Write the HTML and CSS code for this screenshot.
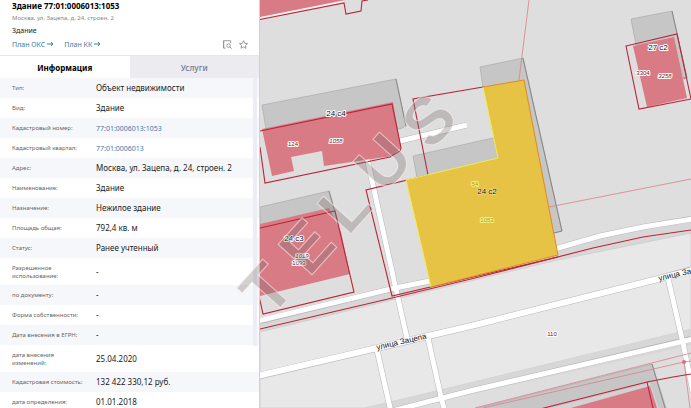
FILE: index.html
```html
<!DOCTYPE html>
<html lang="ru">
<head>
<meta charset="utf-8">
<title>Здание 77:01:0006013:1053</title>
<link rel="stylesheet" href="styles.css">
</head>
<body>
<div class="app">
  <aside class="panel">
    <header class="head">
      <h1 class="title">Здание 77:01:0006013:1053</h1>
      <p class="address">Москва, ул. Зацепа, д. 24, строен. 2</p>
      <p class="kind">Здание</p>
      <div class="actions">
        <a class="plan" href="#oks">План ОКС <svg class="arrow" viewBox="0 0 7 6"><path d="M0 3h6M4 1l2 2-2 2"/></svg></a>
        <a class="plan" href="#kk">План КК <svg class="arrow" viewBox="0 0 7 6"><path d="M0 3h6M4 1l2 2-2 2"/></svg></a>
        <span class="tools">
          <button class="tool" aria-label="Найти на карте"><svg viewBox="0 0 10 10"><path d="M3 9H.7V.8h7.800v2.700M.7 9V.8"/><circle cx="6.200" cy="6.200" r="2"/><path d="M7.700 7.700L9.600 9.600"/></svg></button>
          <button class="tool" aria-label="В избранное"><svg viewBox="0 0 10 10"><path d="M5 .8l1.300 2.900 3.200.3-2.400 2.100.7 3.100L5 7.600 2.200 9.200l.7-3.100L.5 4l3.200-.3z"/></svg></button>
        </span>
      </div>
    </header>
    <div class="tabs" role="tablist">
      <button class="tab tab-active" role="tab" aria-selected="true">Информация</button>
      <button class="tab" role="tab" aria-selected="false">Услуги</button>
    </div>
    <div class="details">
      <table class="facts">
        <tbody>
          <tr><th scope="row">Тип:</th><td>Объект недвижимости</td></tr>
          <tr><th scope="row">Вид:</th><td>Здание</td></tr>
          <tr><th scope="row">Кадастровый номер:</th><td><a href="#number">77:01:0006013:1053</a></td></tr>
          <tr><th scope="row">Кадастровый квартал:</th><td><a href="#block">77:01:0006013</a></td></tr>
          <tr><th scope="row">Адрес:</th><td>Москва, ул. Зацепа, д. 24, строен. 2</td></tr>
          <tr><th scope="row">Наименование:</th><td>Здание</td></tr>
          <tr><th scope="row">Назначение:</th><td>Нежилое здание</td></tr>
          <tr><th scope="row">Площадь общая:</th><td>792,4 кв. м</td></tr>
          <tr><th scope="row">Статус:</th><td>Ранее учтенный</td></tr>
          <tr class="tall"><th scope="row">Разрешенное<br>использование:</th><td>-</td></tr>
          <tr><th scope="row">по документу:</th><td>-</td></tr>
          <tr><th scope="row">Форма собственности:</th><td>-</td></tr>
          <tr><th scope="row">Дата внесения в ЕГРН:</th><td>-</td></tr>
          <tr class="tall"><th scope="row">дата внесения<br>изменений:</th><td>25.04.2020</td></tr>
          <tr><th scope="row">Кадастровая стоимость:</th><td>132 422 330,12 руб.</td></tr>
          <tr><th scope="row">дата определения:</th><td>01.01.2018</td></tr>
        </tbody>
      </table>
      <div class="scrollbar"></div>
    </div>
  </aside>
  <main class="map">
    <svg class="map-canvas" viewBox="260 0 431 408" preserveAspectRatio="xMinYMin slice">
      <rect class="land" x="260" y="0" width="431" height="408"/>
      <path class="strip" d="M260 321L395 288L430 280L558 248L600 236L643 227L691 218V234L553 260L475 279L260 332z"/>
      <path class="quarter" d="M260 332L475 280L553 261L691 233V329L676 333L470 383L365 408H260z"/>
      <path class="strip" d="M365 408L470 383L691 329V345L392 412z"/>

      <g class="road-edge">
        <path d="M260 321L395 288L430 281L558 248L600 236L643 227L691 219"/>
        <path d="M400 141L467 125"/>
        <path d="M367 158L395 285L407 338"/>
        <path d="M377 350L391 412"/>
        <path d="M428 338L441 397L445 412"/>
        <path d="M668 278L683 343L693 392"/>
        <path d="M388 412L470 391L691 339"/>
        <path d="M258 376L475 325L658 279L691 270" class="street"/>
      </g>
      <g class="road">
        <path d="M258 321L395 288L430 281L558 248L600 236L643 227L693 219"/>
        <path d="M400 141L467 125"/>
        <path d="M367 158L395 285L407 338"/>
        <path d="M377 350L391 412"/>
        <path d="M428 338L441 397L445 412"/>
        <path d="M668 278L683 343L693 392"/>
        <path d="M388 412L470 391L693 339"/>
        <path d="M257 376L475 325L658 279L693 270" class="street"/>
      </g>

      <g class="shadow">
        <path d="M262 105L396 79L406 126L400 129L266 129z"/>
        <path d="M260 207L329 191L335 212L347 262L329 212L260 226z"/>
        <path d="M413 156L497 137L502 158L417 178z"/>
        <path d="M480 67L523 58L562 231L553 233L520 85L483 88z"/>
        <path d="M631 19L672 11L687 78L684 79L670 40L636 45z"/>
        <path d="M466 411L652 364L667 411z"/>
      </g>
      <path class="shadow-side" d="M396 79L406 126M523 58L562 231L554 233M672 11L687 78H683M652 364L665 408M329 191L335 212"/>
      <path class="margin" d="M570 403L650 383L660 411H540z"/>

      <g class="building">
        <path d="M260 0H345L260 17z"/>
        <path d="M262 129L393 102L401 148L392 156L324 166L322 151L291 157L294 171L272 176z"/>
        <path d="M260 224L329 208L341 232L350 274L260 296z"/>
        <path d="M633 46L674 37L687 98L647 107z"/>
        <path d="M560 411L650 386L658 411z"/>
      </g>
      <path class="gap" d="M260 18L344 1.500"/>

      <g class="thin">
        <path d="M529 0L519 80M549 207L691 179"/>
        <path d="M475 408L691 353M483 408L684 362L691 361M684 362L690 408"/>
      </g>
      <circle class="node" cx="684" cy="362" r="2"/>

      <g class="parcel">
        <path d="M260 19.500L344 3L346 14L361 11L362 1L368 0"/>
        <path d="M260 131L392 104L401 148L400 151L390 157L265 183L260 147"/>
        <path d="M260 228L335 211L354 292L263 314L259 296"/>
        <path d="M483 87L413 99L428 175L366 190L392 296L558 257"/>
        <path d="M260 329L388 299L475 278L593 248L643 237L691 230"/>
        <path d="M626 46L677 34L691 99L639 109z"/>
        <path d="M540 409L647 382L673 377L691 374M647 382L653 408"/>
      </g>

      <path class="selected" d="M483 87L524 80L558 255L431 287L406 180L498 158z"/>
      <path class="selected-light" d="M431 287L406 180L498 158L483 87"/>
      <path class="selected-dark" d="M483 87L524 80L558 255L431 287"/>

      <g class="house">
        <text x="336" y="116">24 с4</text>
        <text x="294" y="241">24 с3</text>
        <text x="487" y="194" class="plain">24 с2</text>
        <text x="658" y="50">27 с2</text>
      </g>
      <g class="number">
        <text x="293" y="146">124</text>
        <text x="336" y="143" class="slanted">1058</text>
        <text x="302" y="258" class="slanted">1019</text>
        <text x="299" y="265">1093</text>
        <text x="643" y="75">3304</text>
        <text x="665" y="78" class="slanted">3258</text>
        <text x="552" y="336">110</text>
      </g>
      <g class="number-selected">
        <text x="475" y="186">54</text>
        <text x="487" y="222">1053</text>
      </g>
      <text class="street-name" transform="translate(377 350) rotate(-13)">улица Зацепа</text>
      <text class="street-name" transform="translate(659 281) rotate(-13)">улица Зацепа</text>
    </svg>
  </main>
  <svg class="watermark" viewBox="0 0 691 408" preserveAspectRatio="xMinYMin slice">
    <text transform="translate(270 319) rotate(-48)">T</text>
    <text transform="translate(309 278) rotate(-48)">E</text>
    <text transform="translate(348 237) rotate(-48)">L</text>
    <text transform="translate(384 195) rotate(-48)">U</text>
    <text transform="translate(431 152) rotate(-48)">S</text>
  </svg>
</div>
</body>
</html>
```

FILE: styles.css
```css
* { box-sizing: border-box; }

body {
  margin: 0;
  font-family: "Noto Sans", "Open Sans", sans-serif;
  font-size: 8px;
  color: #222;
  background: #fff;
}

a { color: #3f7aa8; text-decoration: none; }

button {
  border: 0;
  padding: 0;
  background: none;
  font: inherit;
  cursor: pointer;
}

.app {
  position: relative;
  display: flex;
  height: 100vh;
  overflow: hidden;
}

.panel {
  flex: 0 0 260px;
  display: flex;
  flex-direction: column;
  overflow: hidden;
  border-right: 1px solid #d2d2d4;
}

.head { flex: none; padding: 0 11px 4px 12px; }

.title {
  margin: 0;
  font-size: 8px;
  line-height: 12px;
  font-weight: 700;
  color: #000;
}

.address {
  margin: 0;
  font-size: 6px;
  line-height: 13px;
  color: #888;
}

.kind {
  margin: 0;
  font-size: 7px;
  line-height: 12px;
}

.actions {
  display: flex;
  align-items: center;
  gap: 10px;
  height: 14px;
  font-size: 7px;
}

.plan {
  display: flex;
  align-items: center;
  gap: 2px;
}

.arrow {
  width: 7px;
  height: 6px;
  fill: none;
  stroke: #3f7aa8;
}

.tools {
  display: flex;
  gap: 7px;
  margin-left: auto;
}

.tool, .tool svg { width: 9px; height: 9px; }

.tool svg {
  display: block;
  fill: none;
  stroke: #8e9098;
  stroke-width: 1;
}

.tabs {
  flex: none;
  display: flex;
  height: 23px;
  border-top: 1px solid #e6e7ec;
}

.tab {
  flex: 1;
  background: #ebebf0;
  color: #80859a;
  font-size: 8px;
  font-weight: 600;
}

.tab-active { background: #fff; color: #000; font-weight: 700; }

.details { position: relative; }

.facts {
  width: 100%;
  border-collapse: collapse;
  table-layout: fixed;
}

.facts tr { height: 20px; }
.facts tr.tall { height: 27px; }
.facts tr:nth-child(odd) { background: #f6f7fa; }
.facts tr:nth-child(odd of .tall) { background: #fff; }
.facts th, .facts td { padding: 0; vertical-align: middle; text-align: left; }

.facts th {
  width: 96px;
  padding-left: 12px;
  font-size: 6px;
  line-height: 8px;
  font-weight: 400;
  color: #666;
}

.facts td { line-height: 12px; }
.facts td a { font-size: 7px; }

.scrollbar {
  position: absolute;
  top: 0;
  right: 2px;
  width: 4px;
  height: 268px;
  background: #ededf5;
}

.map { flex: 1; min-width: 0; }
.map-canvas { display: block; width: 100%; height: 100%; }

.land { fill: #dedede; }
.strip { fill: #d7d7d7; }
.quarter { fill: #e8e8e8; stroke: #c4c4c4; stroke-width: .6; }
.road-edge { fill: none; stroke: #b9b9b9; stroke-width: 6; }
.road { fill: none; stroke: #fff; stroke-width: 5; }
.road-edge .street { stroke-width: 7; }
.road .street { stroke-width: 6; }

.shadow { fill: #c6c6c6; stroke: #a4a4a4; stroke-width: .6; }
.shadow-side { fill: none; stroke: #777; stroke-width: .8; }
.margin { fill: #d2d2d2; }
.building { fill: #d97b84; }
.gap { fill: none; stroke: #f5eeee; stroke-width: 1.500; }
.thin { fill: none; stroke: #d9808a; stroke-width: .8; }
.node { fill: #d9707c; }
.parcel { fill: none; stroke: #bd2338; stroke-width: 1.100; }

.selected { fill: #e6c245; }
.selected-light { fill: none; stroke: #f2eb55; stroke-width: 1; }
.selected-dark { fill: none; stroke: #dd8a26; stroke-width: 1; }

.map-canvas text {
  font-family: "Liberation Sans", Arial, sans-serif;
  paint-order: stroke;
  stroke-linejoin: round;
}

.house text, .number text, .number-selected text { text-anchor: middle; }
.house { font-size: 8px; fill: #111; stroke: #fff; stroke-width: 2; }
.house .plain { stroke: #f3e6b5; stroke-width: 1; }
.number { font-size: 6px; fill: #7a1020; stroke: #fff; stroke-width: 2; }
.number .slanted { font-style: italic; }
.number-selected { font-size: 6px; fill: #a89a20; stroke: #f5f07a; stroke-width: 2; }
.street-name { font-size: 8px; fill: #111; stroke: #fff; stroke-width: 1; }

.watermark {
  position: absolute;
  inset: 0;
  width: 100%;
  height: 100%;
  pointer-events: none;
  font-family: "Liberation Sans", Arial, sans-serif;
  font-size: 66px;
  font-weight: 700;
  fill: rgba(125, 112, 112, .33);
  stroke: rgba(255, 240, 240, .6);
  stroke-width: 1;
}
```
